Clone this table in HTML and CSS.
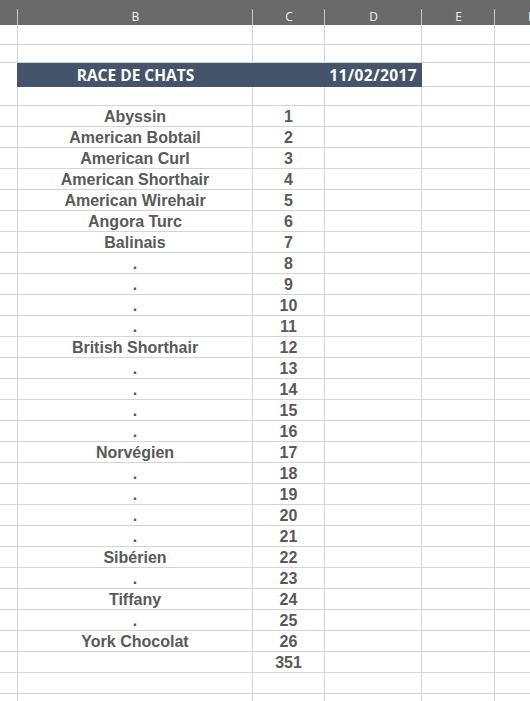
FILE: index.html
```html
<!DOCTYPE html>
<html lang="fr">
<head>
<meta charset="utf-8">
<title>Race de chats</title>
<link rel="stylesheet" href="styles.css">
</head>
<body>
<div class="sheet">
  <div class="row head">
    <div class="hc"></div><div class="hc">B</div><div class="hc">C</div><div class="hc">D</div><div class="hc">E</div><div class="hc">F</div>
  </div>
  <div class="row r20"><div class="c"></div><div class="c"></div><div class="c"></div><div class="c"></div><div class="c"></div><div class="c"></div></div>
  <div class="row r18"><div class="c"></div><div class="c"></div><div class="c"></div><div class="c"></div><div class="c"></div><div class="c"></div></div>
  <div class="row band">
    <div class="c a-band"></div>
    <div class="c title">RACE DE CHATS</div>
    <div class="c dark"></div>
    <div class="c date">11/02/2017</div>
    <div class="c"></div><div class="c"></div>
  </div>
  <div class="row r19"><div class="c"></div><div class="c"></div><div class="c"></div><div class="c"></div><div class="c"></div><div class="c"></div></div>
  <div id="data"></div>
  <div class="row d"><div class="c"></div><div class="c"></div><div class="c v"></div><div class="c"></div><div class="c"></div><div class="c"></div></div>
  <div class="row d"><div class="c"></div><div class="c"></div><div class="c"></div><div class="c"></div><div class="c"></div><div class="c"></div></div>
</div>
<script src="script.js"></script>
</body>
</html>
```

FILE: script.js
```js
const names = ["Abyssin","American Bobtail","American Curl","American Shorthair","American Wirehair","Angora Turc","Balinais",".",".",".",".","British Shorthair",".",".",".",".","Norvégien",".",".",".",".","Sibérien",".","Tiffany",".","York Chocolat"];
const host = document.getElementById('data');
let total = 0;
const rows = names.map((n, i) => { total += i + 1; return [n, String(i + 1)]; });
rows.push(["", String(total)]);
const frag = document.createDocumentFragment();
rows.forEach(([n, v]) => {
  const r = document.createElement('div');
  r.className = 'row d';
  const cells = ['', n, v, '', '', ''];
  cells.forEach((t, k) => {
    const c = document.createElement('div');
    c.className = 'c' + (k === 1 || k === 2 ? ' v' : '');
    c.textContent = t;
    r.appendChild(c);
  });
  frag.appendChild(r);
});
host.replaceWith(frag);
```

FILE: styles.css
```css
html, body {
  margin: 0;
  padding: 0;
  background: #ffffff;
  overflow: hidden;
}
.sheet {
  width: 567px;
  font-family: "Liberation Sans", Arial, sans-serif;
}
.row {
  display: grid;
  grid-template-columns: 18px 235px 72px 97px 73px 72px;
}
.head {
  height: 25px;
  background: #6a6a6a;
}
.hc {
  display: flex;
  align-items: center;
  justify-content: center;
  padding-top: 8px;
  box-sizing: border-box;
  font-family: "Open Sans", "Noto Sans", sans-serif;
  font-size: 12px;
  color: #f2f2f2;
  background: linear-gradient(#c6c6c6, #c6c6c6) right 9px / 1px 16px no-repeat;
}
.c {
  box-sizing: border-box;
  border-right: 1px solid #d4d4d4;
  border-bottom: 1px solid #d4d4d4;
  display: flex;
  align-items: center;
  justify-content: center;
  overflow: hidden;
  white-space: nowrap;
}
.r20 { height: 20px; }
.r18 { height: 18px; }
.r19 { height: 19px; }
.d { height: 21px; }
.d .c { padding-top: 2px; }
.band { height: 24px; }
.band .a-band { border-right-color: #44546a; border-bottom: none; }
.band .title, .band .dark, .band .date {
  background: #44546a;
  border: none;
  color: #ffffff;
  font-family: "Open Sans", "Noto Sans", sans-serif;
  font-weight: 700;
  font-size: 15.5px;
}
.band .date {
  justify-content: flex-end;
  padding-right: 4px;
  letter-spacing: 0.4px;
  border-right: 1px solid #44546a;
}
.v {
  font-weight: 700;
  font-size: 16px;
  color: #595959;
}
```
